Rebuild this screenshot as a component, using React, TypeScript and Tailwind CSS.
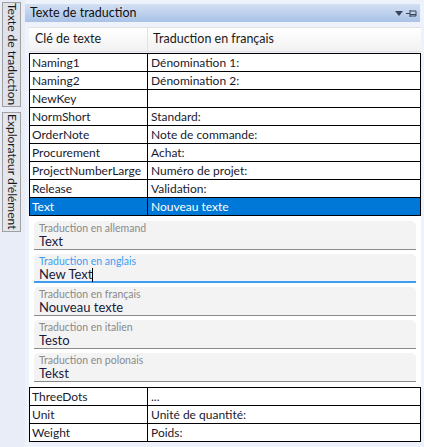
import React from "react";

const topRows = [
    ["Naming1", "Dénomination 1:"],
    ["Naming2", "Dénomination 2:"],
    ["NewKey", ""],
    ["NormShort", "Standard:"],
    ["OrderNote", "Note de commande:"],
    ["Procurement", "Achat:"],
    ["ProjectNumberLarge", "Numéro de projet:"],
    ["Release", "Validation:"],
];

const bottomRows = [
    ["ThreeDots", "..."],
    ["Unit", "Unité de quantité:"],
    ["Weight", "Poids:"],
];

const fields = [
    { label: "Traduction en allemand", value: "Text" },
    { label: "Traduction en anglais", value: "New Text", focused: true },
    { label: "Traduction en français", value: "Nouveau texte" },
    { label: "Traduction en italien", value: "Testo" },
    { label: "Traduction en polonais", value: "Tekst" },
];

function Row({ k, v, selected }: { k: string; v: string; selected?: boolean }) {
    return (
        <div
            className={`flex h-[18px] border-b border-black text-[12px] leading-[18px] ${
                selected ? "bg-[#0078d7] text-white" : "bg-white text-[#1a1a2e]"
            }`}
        >
            <div className="w-[118px] shrink-0 whitespace-nowrap border-r border-black pl-[2px]">{k}</div>
            <div className="flex-1 whitespace-nowrap pl-[3px]">{v}</div>
        </div>
    );
}

function Field({ label, value, focused }: { label: string; value: string; focused?: boolean }) {
    return (
        <div
            className={`h-[29px] rounded-t-[5px] bg-[#f3f3f3] px-[5px] pt-[1px] ${
                focused ? "border-b-2 border-[#3d9df2]" : "border-b border-[#8a8a8a]"
            }`}
        >
            <div className={`text-[10.5px] leading-[12px] ${focused ? "text-[#3d9df2]" : "text-[#8a8a8a]"}`}>
                {label}
            </div>
            <div className="flex items-center text-[13px] leading-[15px] text-[#1a1a3a]">
                {value}
                {focused && <span className="inline-block h-[14px] w-px bg-black" />}
            </div>
        </div>
    );
}

export default function App() {
    return (
        <div
            className="flex h-[447px] w-[424px] overflow-hidden bg-[#eef2fa]"
            style={{ fontFamily: '"Segoe UI", Lato, sans-serif' }}
        >
            {/* side tabs */}
            <div className="flex w-[25px] shrink-0 flex-col gap-[5px] bg-[#e9edf7] pl-[2px] pt-[2px]">
                <div className="flex h-[105px] w-[19px] items-center justify-center whitespace-nowrap border border-[#a0a0a0] bg-[#dfe2ea] text-[12px] text-[#1a1a1a] [writing-mode:vertical-rl]">
                    Texte de traduction
                </div>
                <div className="flex h-[120px] w-[19px] items-center justify-center whitespace-nowrap border border-[#a0a0a0] bg-[#e4e6ec] text-[12px] text-[#1a1a1a] [writing-mode:vertical-rl]">
                    Explorateur d'élément
                </div>
            </div>

            {/* panel */}
            <div className="flex flex-1 flex-col pr-[3px] pt-[4px]">
                <div className="mr-px flex h-[18px] items-center justify-between bg-gradient-to-b from-[#d3e0f3] to-[#a9c2e6] pl-[5px] pr-[3px] text-[12.5px] text-[#111]">
                    <span>Texte de traduction</span>
                    <div className="flex items-center gap-[3px]">
                        <svg width="8" height="5" viewBox="0 0 8 5">
                            <path d="M0 0 H8 L4 5 Z" fill="#3a4455" />
                        </svg>
                        <svg width="11" height="9" viewBox="0 0 11 9">
                            <path d="M0 4.5 H4 M4 1 V8 M4 2 H10 V7 H4 M4 5.5 H10" stroke="#3a4455" strokeWidth="1" fill="none" />
                        </svg>
                    </div>
                </div>

                <div className="ml-[4px] mt-[5px] flex flex-1 flex-col">
                    {/* header */}
                    <div className="flex h-[25px] items-center border-y border-[#e2e2e2] bg-gradient-to-b from-white to-[#f2f2f2] text-[12.5px] text-[#1a1a1a]">
                        <div className="flex h-full w-[119px] items-center border-r border-[#e2e2e2] pl-[6px]">
                            Clé de texte
                        </div>
                        <div className="pl-[5px]">Traduction en français</div>
                    </div>

                    <div className="mt-px border-x border-t border-black">
                        {topRows.map(([k, v]) => (
                            <Row key={k} k={k} v={v} />
                        ))}
                        <Row k="Text" v="Nouveau texte" selected />
                    </div>

                    <div className="flex flex-col gap-[4px] bg-white px-[5px] pb-[5px] pt-[5px]">
                        {fields.map((f) => (
                            <Field key={f.label} {...f} />
                        ))}
                    </div>

                    <div className="border-x border-t border-black">
                        {bottomRows.map(([k, v]) => (
                            <Row key={k} k={k} v={v} />
                        ))}
                    </div>
                </div>
            </div>
        </div>
    );
}
